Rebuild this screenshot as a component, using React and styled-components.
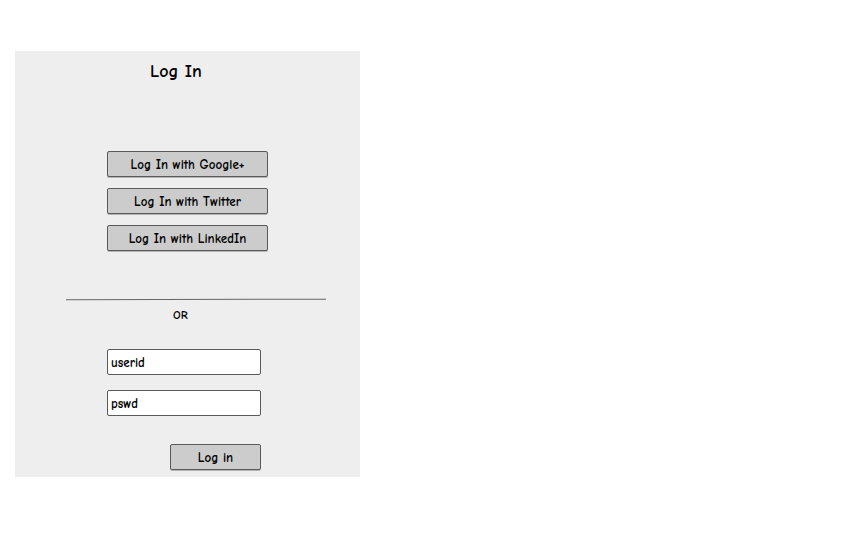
import React from 'react';
import styled, { createGlobalStyle } from 'styled-components';

const GlobalStyle = createGlobalStyle`
  body {
    margin: 0;
    background: #ffffff;
    font-family: "Comic Sans MS", "Comic Neue", "Open Sans", sans-serif;
    color: #000;
  }
`;

const Page = styled.div`
  width: 868px;
  height: 559px;
  padding: 51px 0 0 15px;
  box-sizing: border-box;
`;

const Panel = styled.div`
  width: 345px;
  height: 426px;
  background: #eeeeee;
  display: flex;
  flex-direction: column;
  align-items: flex-start;
  box-sizing: border-box;
`;

const Title = styled.h1`
  margin: 9px 0 0 135px;
  font-size: 18px;
  font-weight: 600;
  line-height: 24px;
`;

const SocialList = styled.div`
  display: flex;
  flex-direction: column;
  gap: 11px;
  margin: 67px 0 0 92px;
`;

const SketchButton = styled.button`
  width: ${(p) => p.$width}px;
  height: 26px;
  box-sizing: border-box;
  background: #cccccc;
  border: 1.5px solid #5a5a5a;
  border-radius: 2px;
  box-shadow: 0 1px 0 #b5b5b5;
  font-family: inherit;
  font-size: 13px;
  font-weight: 600;
  color: #000;
  padding: 0;
  cursor: pointer;
`;

const Divider = styled.div`
  width: 260px;
  height: 0;
  margin: 48px 0 0 51px;
  border-top: 1.5px solid #666666;
  transform: rotate(-0.15deg);
`;

const OrLabel = styled.span`
  margin: 8px 0 0 158px;
  font-size: 12px;
  font-weight: 600;
  line-height: 14px;
`;

const Fields = styled.div`
  display: flex;
  flex-direction: column;
  gap: 15px;
  margin: 27px 0 0 92px;
  width: 154px;
`;

const Field = styled.input`
  width: 154px;
  height: 26px;
  box-sizing: border-box;
  background: #ffffff;
  border: 1.5px solid #5a5a5a;
  border-radius: 2px;
  padding: 0 3px;
  font-family: inherit;
  font-size: 13px;
  font-weight: 600;
  color: #000;
  outline: none;
`;

const Submit = styled(SketchButton)`
  align-self: flex-end;
  margin-top: 13px;
`;

export default function App() {
  return (
    <>
      <GlobalStyle />
      <Page>
        <Panel>
          <Title>Log In</Title>
          <SocialList>
            <SketchButton $width={161}>Log In with Google+</SketchButton>
            <SketchButton $width={161}>Log In with Twitter</SketchButton>
            <SketchButton $width={161}>Log In with LinkedIn</SketchButton>
          </SocialList>
          <Divider />
          <OrLabel>OR</OrLabel>
          <Fields>
            <Field defaultValue="userid" />
            <Field defaultValue="pswd" />
            <Submit $width={91}>Log in</Submit>
          </Fields>
        </Panel>
      </Page>
    </>
  );
}
